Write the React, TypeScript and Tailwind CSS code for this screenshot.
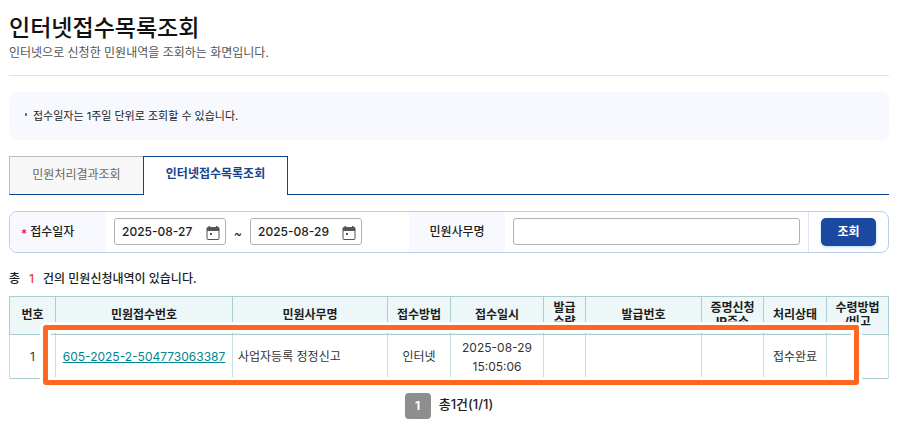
import type { ReactNode } from "react";

type Column = { label: ReactNode; width: string };

const columns: Column[] = [
  { label: "번호", width: "w-[46px]" },
  { label: "민원접수번호", width: "w-[177px]" },
  { label: "민원사무명", width: "w-[155px]" },
  { label: "접수방법", width: "w-[63px]" },
  { label: "접수일시", width: "w-[93px]" },
  { label: <>발급<br />수량</>, width: "w-[42px]" },
  { label: "발급번호", width: "w-[116px]" },
  { label: <>증명신청<br />IP주소</>, width: "w-[62px]" },
  { label: "처리상태", width: "w-[63px]" },
  { label: <>수령방법<br />/비고</>, width: "w-[62px]" },
];

function CalendarIcon() {
  return (
    <svg width="14" height="14" viewBox="0 0 14 14" fill="none" aria-hidden="true">
      <path d="M1 5V12.5Q1 13.5 2 13.5H12Q13 13.5 13 12.5V5" stroke="#555" />
      <path d="M0.5 5V2.5Q0.5 1 2 1H12Q13.5 1 13.5 2.5V5Z" fill="#555" />
      <path d="M2.5 0H4V2H2.5ZM10 0H11.5V2H10ZM4 7H6V9H4Z" fill="#555" />
    </svg>
  );
}

function DateField({ id, label, value }: { id: string; label: string; value: string }) {
  return (
    <div className="flex h-[27px] w-28 items-center justify-between rounded-[3px] border border-[#b1b1b1] bg-white pr-[5px] pl-[7px]">
      <input
        id={id}
        type="text"
        aria-label={label}
        defaultValue={value}
        className="w-20 bg-transparent text-xs font-medium text-[#1d1d1d] outline-none"
      />
      <button type="button" aria-label={`${label} 달력`} className="mt-[2px]">
        <CalendarIcon />
      </button>
    </div>
  );
}

function Cell({ children, className = "text-center" }: { children?: ReactNode; className?: string }) {
  return (
    <td className={`border-x border-[#c3dfe0] px-[5px] py-[2px] leading-[19px] ${className}`}>{children}</td>
  );
}

export default function App() {
  return (
    <main className="bg-white pt-[14px] pr-6 pb-2 pl-[9px] font-['Inter','Noto_Sans_CJK_KR',sans-serif] text-xs text-[#1d1d1d]">
      <header className="border-b border-[#e4e4e4] pb-[14px]">
        <h1 className="mb-[2px] text-[23px] leading-[29px] font-medium text-[#111]">인터넷접수목록조회</h1>
        <p className="leading-4 text-[#555]">인터넷으로 신청한 민원내역을 조회하는 화면입니다.</p>
      </header>

      <ul className="mt-4 rounded-lg bg-[#f8f9ff] px-4 py-4">
        <li className="flex items-center gap-[6px] text-[11px] leading-4 text-[#222]">
          <span className="mb-[3px] h-[3px] w-[2px] bg-[#777]" />
          접수일자는 1주일 단위로 조회할 수 있습니다.
        </li>
      </ul>

      <nav className="mt-4 flex h-[39px]">
        <a
          href="#result"
          className="flex w-[134px] items-center justify-center border-t border-b border-l border-t-[#bdbdbd] border-b-[#0d4197] border-l-[#bdbdbd] bg-[#f7f7f7] pb-[2px] text-[#666]"
        >
          민원처리결과조회
        </a>
        <a
          href="#list"
          aria-current="page"
          className="flex w-[145px] items-center justify-center border-x border-t border-[#0d4197] pb-1 font-bold text-[#18438f]"
        >
          인터넷접수목록조회
        </a>
        <span className="flex-1 border-b border-[#0d4197]" />
      </nav>

      <form
        className="mt-4 flex h-[42px] overflow-hidden rounded-lg border border-[#bccdeb]"
        onSubmit={(event) => event.preventDefault()}
      >
        <label htmlFor="start" className="flex w-24 items-center gap-[3px] bg-[#f8f9ff] pl-[11px] font-medium">
          <span className="pt-1 text-[#e5174f]">*</span>접수일자
        </label>
        <div className="flex flex-1 items-center gap-2 px-2 pb-px">
          <DateField id="start" label="접수 시작일자" value="2025-08-27" />
          <span className="w-2 pt-1 text-center">~</span>
          <DateField id="end" label="접수 종료일자" value="2025-08-29" />
        </div>
        <label htmlFor="task" className="flex w-24 items-center justify-center bg-[#f8f9ff] font-medium">
          민원사무명
        </label>
        <div className="flex flex-1 items-center px-2 pb-px">
          <input id="task" type="text" className="h-[27px] w-full rounded-[3px] border border-[#b1b1b1] px-2 outline-none" />
        </div>
        <div className="flex items-center border-l border-[#dde6f6] px-3">
          <button type="submit" className="h-7 w-[55px] rounded-[5px] bg-[#1b48a0] font-bold text-white shadow-sm shadow-blue-200">
            조회
          </button>
        </div>
      </form>

      <p className="mt-[18px] flex gap-[9px] leading-4 font-medium">
        <span>총</span>
        <span className="text-[#ec3838]">1</span>
        <span>건의 민원신청내역이 있습니다.</span>
      </p>

      <div className="relative mt-[9px]">
        <table className="w-full table-fixed border-collapse border border-[#a9cdd0]">
          <colgroup>
            {columns.map((column, index) => (
              <col key={index} className={column.width} />
            ))}
          </colgroup>
          <thead>
            <tr className="h-[38px] bg-[#edf7f7]">
              {columns.map((column, index) => (
                <th key={index} scope="col" className="border border-[#a9cdd0] pb-[2px] leading-[14px] font-bold">
                  {column.label}
                </th>
              ))}
            </tr>
          </thead>
          <tbody>
            <tr className="h-11 text-[#333]">
              <Cell>1</Cell>
              <Cell>
                <a href="#605-2025-2-504773063387" className="whitespace-nowrap text-[#00868e] underline">
                  605-2025-2-504773063387
                </a>
              </Cell>
              <Cell className="text-left">사업자등록 정정신고</Cell>
              <Cell>인터넷</Cell>
              <Cell>
                2025-08-29
                <br />
                15:05:06
              </Cell>
              <Cell />
              <Cell />
              <Cell />
              <Cell>접수완료</Cell>
              <Cell />
            </tr>
          </tbody>
        </table>
        <div className="pointer-events-none absolute top-[29px] right-[30px] -bottom-[6px] left-[34px] rounded-[3px] border-5 border-[#ff6720] shadow-[0_0_0_3px_white,inset_0_0_0_3px_white]" />
      </div>

      <div className="mt-[14px] flex justify-center gap-2">
        <button type="button" aria-current="page" className="h-[26px] w-[26px] rounded-sm bg-[#8e8e8e] font-bold text-white">
          1
        </button>
        <span className="text-[13px] leading-[22px] font-medium">총1건(1/1)</span>
      </div>
    </main>
  );
}
